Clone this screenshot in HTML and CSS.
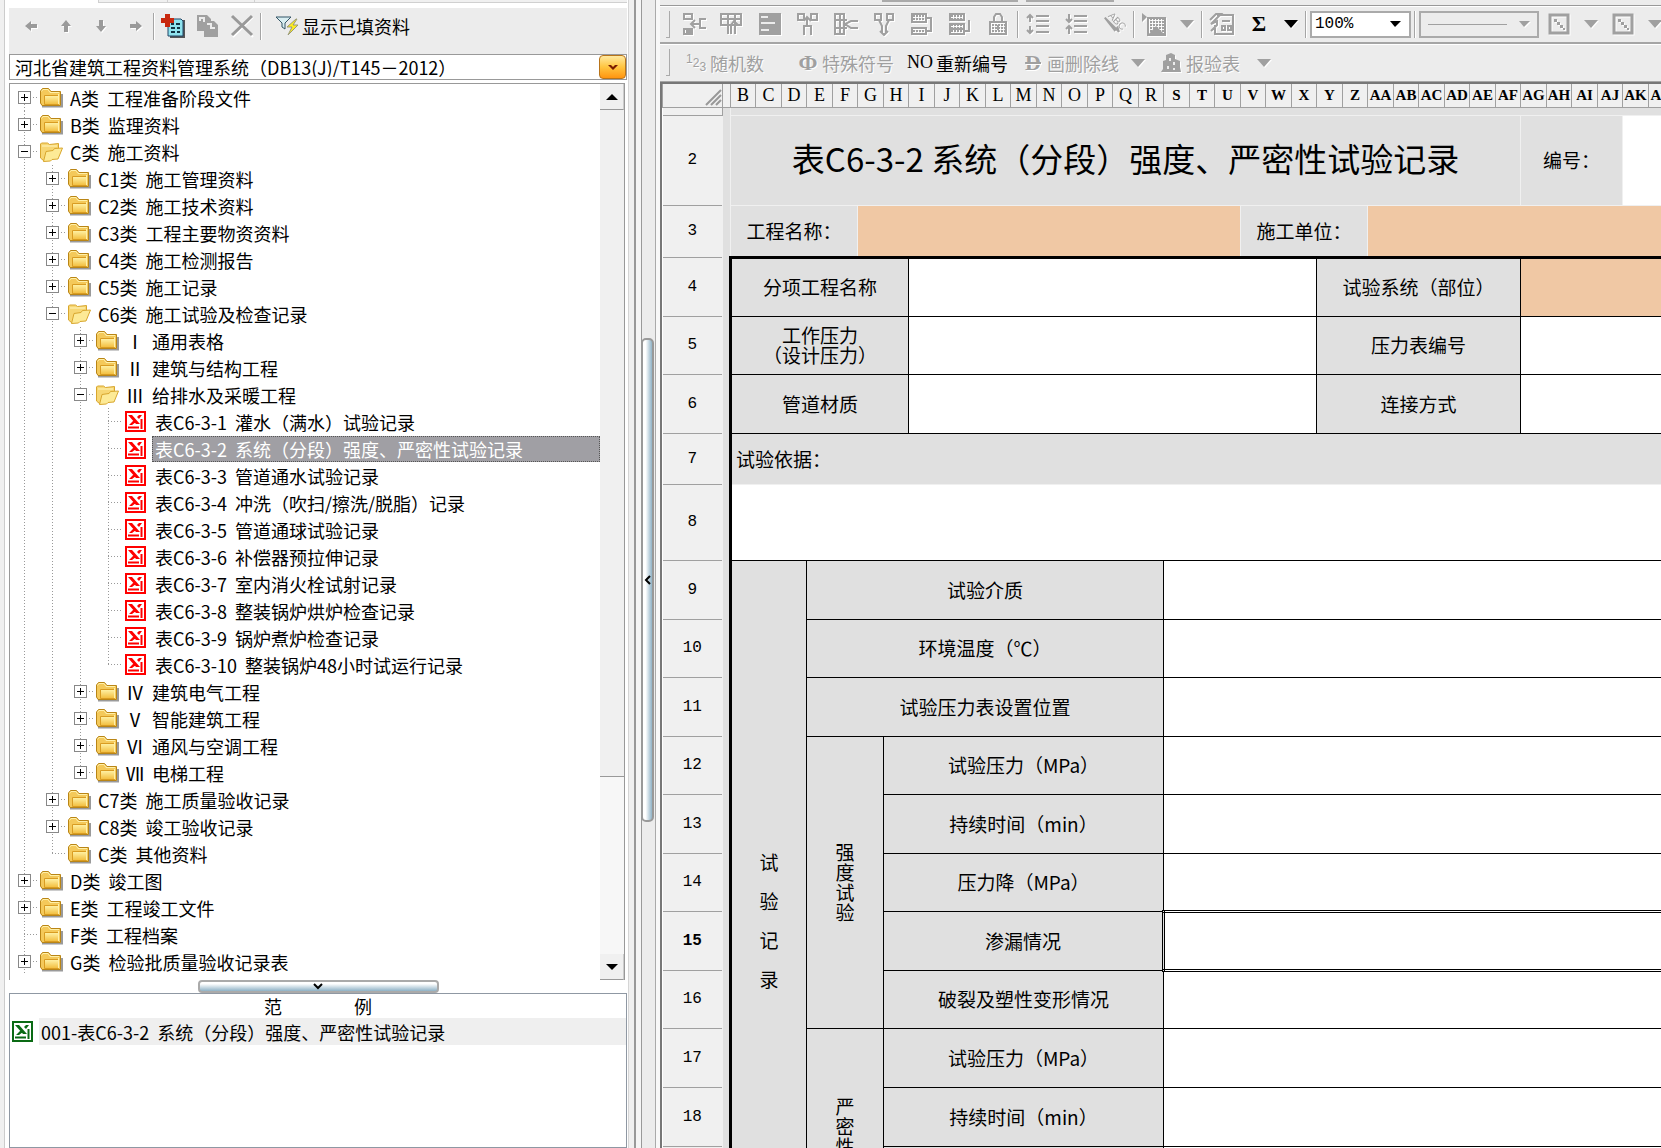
FILE: index.html
```html
<!DOCTYPE html>
<html lang="zh-CN">
<head>
<meta charset="utf-8">
<title>河北省建筑工程资料管理系统</title>
<link rel="stylesheet" href="styles.css">
</head>
<body>
<svg class="defs" aria-hidden="true">
  <defs>
    <linearGradient id="gold" x1="0" y1="0" x2="0" y2="1"><stop offset="0" stop-color="#fff3a8"/><stop offset="1" stop-color="#f2bd3c"/></linearGradient>
    <pattern id="dots" width="3" height="3" patternUnits="userSpaceOnUse"><path d="M0 0h2v2H0z" fill="#a0a0a0"/></pattern>
    <symbol id="folder" viewBox="0 0 24 21">
      <path d="M3 19.500h20V7" fill="none" stroke="#9a9a9a" stroke-width="2"/>
      <path d="M1.500 16V4l2-2.500h6L12 4.500h9.500V18.500H3z" fill="#f4c95a" stroke="#b98516"/>
      <path d="M2.500 4.500l1.500-2h5l2 3h9" fill="none" stroke="#fff0a8"/>
      <path d="M5.500 8.500h14v9h-14z" fill="url(#gold)" stroke="#d99c22"/>
      <path d="M19.500 7v10" stroke="#fff0a8"/>
    </symbol>
    <symbol id="open" viewBox="0 0 24 21">
      <path d="M1.500 17V3l1-1h6l2 1.500 9-1v5L5 20z" fill="#f7d774" stroke="#d8a62e"/>
      <path d="M3 5h15" stroke="#fff6bf"/>
      <path d="M4.500 20.500L7 10.500l7-1 1.500-2 8-.5-4.500 11-6 .5-1.500 1.500z" fill="#fdea96" stroke="#d8a62e"/>
    </symbol>
    <symbol id="sheet" viewBox="0 0 21 21">
      <path d="M0 0h21v21H0z" fill="currentColor"/><path d="M2 2h17v17H2z" fill="#fff"/>
      <path d="M3 4h4l8 9h-4zM14 4h3l-3 4-2-2zM4 14l5-5 2 2-4 3z" fill="currentColor"/>
      <path d="M3 16.500h11M16.500 8v10" stroke="currentColor" stroke-width="2"/>
    </symbol>
  </defs>
</svg>

<aside class="side">
  <div class="tabs"><span></span><span></span><span></span></div>
  <div class="tools">
    <button class="arrow" aria-label="后退"><svg width="14" height="14"><path d="M1 7l6-5v3h6v4H7v3z"/></svg></button>
    <button class="arrow" aria-label="上移"><svg width="14" height="14"><path d="M7 1l5 6H9v6H5V7H2z"/></svg></button>
    <button class="arrow" aria-label="下移"><svg width="14" height="14"><path d="M7 13L2 7h3V1h4v6h3z"/></svg></button>
    <button class="arrow" aria-label="前进"><svg width="14" height="14"><path d="M13 7L7 2v3H1v4h6v3z"/></svg></button>
    <i class="sep"></i>
    <button class="tool" aria-label="新建"><svg width="26" height="26"><path d="M10 7h15v18H10z" fill="#555"/><path d="M8 6h13l2 2v15H8z" fill="#8fe3ee" stroke="#246" /><path d="M11 11h3m2 0h4m-9 4h4m2 0h3m-9 4h4m2 0h3" stroke="#134" stroke-width="2"/><path d="M5 1h5v4h4v5h-4v4H5v-4H1V5h4z" fill="#c8280e"/></svg></button>
    <button class="tool" aria-label="复制"><svg width="26" height="26"><path d="M2 2h10l4 4v12H2zM9 8h10l4 4v12H9z" fill="#a0a0a0"/><path d="M9 9V5H5v3m7 3h4v4h4" fill="none" stroke="#ececec" stroke-width="2"/></svg></button>
    <button class="tool" aria-label="删除"><svg width="26" height="26"><path d="M3 4l20 20M23 4L3 24" stroke="#fff" stroke-width="2"/><path d="M2 3l20 19M22 3L2 22" stroke="#999" stroke-width="3"/></svg></button>
    <i class="sep"></i>
    <button class="filter"><svg width="26" height="24"><path d="M2 3h15l-6 6v6l-3-2V9z" fill="#d9eef2" stroke="#356"/><path d="M22 5l-9 8h5l-4 8 10-10h-5l4-6z" fill="#ffee20" stroke="#997"/></svg>显示已填资料</button>
  </div>
  <div class="combo">
    <select aria-label="资料系统"><option>河北省建筑工程资料管理系统（DB13(J)/T145－2012）</option></select>
    <span class="drop" aria-hidden="true"><svg width="12" height="8"><path d="M1 2h3l2 2 2-2h3L6 7z" fill="#7a1c00"/></svg></span>
  </div>

  <div class="treebox">
    <ul class="tree">
      <li class="first"><div class="row"><button class="toggle plus" aria-label="展开"></button><svg class="ico"><use href="#folder"/></svg><span class="label"><b>A类</b><span>工程准备阶段文件</span></span></div></li>
      <li><div class="row"><button class="toggle plus" aria-label="展开"></button><svg class="ico"><use href="#folder"/></svg><span class="label"><b>B类</b><span>监理资料</span></span></div></li>
      <li><div class="row"><button class="toggle" aria-label="折叠"></button><svg class="ico"><use href="#open"/></svg><span class="label"><b>C类</b><span>施工资料</span></span></div>
        <ul>
          <li><div class="row"><button class="toggle plus" aria-label="展开"></button><svg class="ico"><use href="#folder"/></svg><span class="label"><b>C1类</b><span>施工管理资料</span></span></div></li>
          <li><div class="row"><button class="toggle plus" aria-label="展开"></button><svg class="ico"><use href="#folder"/></svg><span class="label"><b>C2类</b><span>施工技术资料</span></span></div></li>
          <li><div class="row"><button class="toggle plus" aria-label="展开"></button><svg class="ico"><use href="#folder"/></svg><span class="label"><b>C3类</b><span>工程主要物资资料</span></span></div></li>
          <li><div class="row"><button class="toggle plus" aria-label="展开"></button><svg class="ico"><use href="#folder"/></svg><span class="label"><b>C4类</b><span>施工检测报告</span></span></div></li>
          <li><div class="row"><button class="toggle plus" aria-label="展开"></button><svg class="ico"><use href="#folder"/></svg><span class="label"><b>C5类</b><span>施工记录</span></span></div></li>
          <li><div class="row"><button class="toggle" aria-label="折叠"></button><svg class="ico"><use href="#open"/></svg><span class="label"><b>C6类</b><span>施工试验及检查记录</span></span></div>
            <ul>
              <li><div class="row"><button class="toggle plus" aria-label="展开"></button><svg class="ico"><use href="#folder"/></svg><span class="label"><b>Ⅰ</b><span>通用表格</span></span></div></li>
              <li><div class="row"><button class="toggle plus" aria-label="展开"></button><svg class="ico"><use href="#folder"/></svg><span class="label"><b>Ⅱ</b><span>建筑与结构工程</span></span></div></li>
              <li><div class="row"><button class="toggle" aria-label="折叠"></button><svg class="ico"><use href="#open"/></svg><span class="label"><b>Ⅲ</b><span>给排水及采暖工程</span></span></div>
                <ul class="forms">
                  <li><div class="row"><i class="stub"></i><svg class="ico"><use href="#sheet"/></svg><span class="label"><b>表C6-3-1</b><span>灌水（满水）试验记录</span></span></div></li>
                  <li><div class="row"><i class="stub"></i><svg class="ico"><use href="#sheet"/></svg><span class="label selected"><b>表C6-3-2</b><span>系统（分段）强度、严密性试验记录</span></span></div></li>
                  <li><div class="row"><i class="stub"></i><svg class="ico"><use href="#sheet"/></svg><span class="label"><b>表C6-3-3</b><span>管道通水试验记录</span></span></div></li>
                  <li><div class="row"><i class="stub"></i><svg class="ico"><use href="#sheet"/></svg><span class="label"><b>表C6-3-4</b><span>冲洗（吹扫/擦洗/脱脂）记录</span></span></div></li>
                  <li><div class="row"><i class="stub"></i><svg class="ico"><use href="#sheet"/></svg><span class="label"><b>表C6-3-5</b><span>管道通球试验记录</span></span></div></li>
                  <li><div class="row"><i class="stub"></i><svg class="ico"><use href="#sheet"/></svg><span class="label"><b>表C6-3-6</b><span>补偿器预拉伸记录</span></span></div></li>
                  <li><div class="row"><i class="stub"></i><svg class="ico"><use href="#sheet"/></svg><span class="label"><b>表C6-3-7</b><span>室内消火栓试射记录</span></span></div></li>
                  <li><div class="row"><i class="stub"></i><svg class="ico"><use href="#sheet"/></svg><span class="label"><b>表C6-3-8</b><span>整装锅炉烘炉检查记录</span></span></div></li>
                  <li><div class="row"><i class="stub"></i><svg class="ico"><use href="#sheet"/></svg><span class="label"><b>表C6-3-9</b><span>锅炉煮炉检查记录</span></span></div></li>
                  <li><div class="row"><i class="stub"></i><svg class="ico"><use href="#sheet"/></svg><span class="label"><b>表C6-3-10</b><span>整装锅炉48小时试运行记录</span></span></div></li>
                </ul>
              </li>
              <li><div class="row"><button class="toggle plus" aria-label="展开"></button><svg class="ico"><use href="#folder"/></svg><span class="label"><b>Ⅳ</b><span>建筑电气工程</span></span></div></li>
              <li><div class="row"><button class="toggle plus" aria-label="展开"></button><svg class="ico"><use href="#folder"/></svg><span class="label"><b>Ⅴ</b><span>智能建筑工程</span></span></div></li>
              <li><div class="row"><button class="toggle plus" aria-label="展开"></button><svg class="ico"><use href="#folder"/></svg><span class="label"><b>Ⅵ</b><span>通风与空调工程</span></span></div></li>
              <li><div class="row"><button class="toggle plus" aria-label="展开"></button><svg class="ico"><use href="#folder"/></svg><span class="label"><b>Ⅶ</b><span>电梯工程</span></span></div></li>
            </ul>
          </li>
          <li><div class="row"><button class="toggle plus" aria-label="展开"></button><svg class="ico"><use href="#folder"/></svg><span class="label"><b>C7类</b><span>施工质量验收记录</span></span></div></li>
          <li><div class="row"><button class="toggle plus" aria-label="展开"></button><svg class="ico"><use href="#folder"/></svg><span class="label"><b>C8类</b><span>竣工验收记录</span></span></div></li>
          <li><div class="row"><i class="stub"></i><svg class="ico"><use href="#folder"/></svg><span class="label"><b>C类</b><span>其他资料</span></span></div></li>
        </ul>
      </li>
      <li><div class="row"><button class="toggle plus" aria-label="展开"></button><svg class="ico"><use href="#folder"/></svg><span class="label"><b>D类</b><span>竣工图</span></span></div></li>
      <li><div class="row"><button class="toggle plus" aria-label="展开"></button><svg class="ico"><use href="#folder"/></svg><span class="label"><b>E类</b><span>工程竣工文件</span></span></div></li>
      <li><div class="row"><i class="stub"></i><svg class="ico"><use href="#folder"/></svg><span class="label"><b>F类</b><span>工程档案</span></span></div></li>
      <li class="more"><div class="row"><button class="toggle plus" aria-label="展开"></button><svg class="ico"><use href="#folder"/></svg><span class="label"><b>G类</b><span>检验批质量验收记录表</span></span></div></li>
    </ul>
    <div class="scroll">
      <button aria-label="向上滚动"><svg width="12" height="6"><path d="M0 6l6-6 6 6z"/></svg></button>
      <div class="track"><div class="thumb"></div></div>
      <button aria-label="向下滚动"><svg width="12" height="6"><path d="M0 0l6 6 6-6z"/></svg></button>
    </div>
  </div>

  <div class="hsplit"><button aria-label="收起范例"><svg width="10" height="8"><path d="M1 1l4 4 4-4" fill="none" stroke="#000" stroke-width="2"/></svg></button></div>
  <section class="sample">
    <h2><span>范</span><span>例</span></h2>
    <div class="sample-row"><svg class="green"><use href="#sheet"/></svg><span class="label"><b>001-表C6-3-2</b><span>系统（分段）强度、严密性试验记录</span></span></div>
  </section>
</aside>

<div class="vsplit"><button aria-label="收起目录"><svg width="8" height="10"><path d="M6 1L2 5l4 4" fill="none" stroke="#000" stroke-width="2"/></svg></button></div>

<main class="work">
  <div class="strip"><i></i><i></i></div>
  <div class="bar">
    <i class="grip"></i>
    <button class="b" aria-label="插入单元格"><svg width="24" height="24"><path d="M2 2h8v5H2zM2 17h8v5H2zM24 7h-6v9h6M18 12H9m4-4l-4 4 4 4" /><path d="M4 18h5v3H4z" class="f"/></svg></button>
    <button class="b" aria-label="插入行"><svg width="24" height="24"><path d="M1 2h20v11H1zM1 7h20M8 2v11M15 2v11M8 22v-9h3v9m4 0v-9M11 13l3-4 4 4"/></svg></button>
    <button class="b" aria-label="表格"><svg width="24" height="24"><path d="M1 1h22v22H1z" class="f"/><path d="M3 5h7M3 11h14M3 18h8" class="w"/></svg></button>
    <button class="b" aria-label="插入列"><svg width="24" height="24"><path d="M2 2h6v6H2zM15 2h6v6h-6zM8 23v-9h7v9M11 14V5m-3 4l3-4 4 4"/></svg></button>
    <button class="b" aria-label="删除单元格"><svg width="24" height="24"><path d="M1 2h9v20H1zM1 8h12M1 16h12M6 2v20M24 9h-7l-6 3 6 4h7"/></svg></button>
    <button class="b" aria-label="合并"><svg width="24" height="24"><path d="M3 2h6v6H3zM15 2h6v6h-6zM7 8l3 6v8M17 8l-3 6v8M8 19l4 4 4-4"/></svg></button>
    <button class="b" aria-label="复制行"><svg width="24" height="24"><path d="M2 2h14v8H2zM2 16h14v6H2z" fill="url(#dots)"/><path d="M17 6h4v13h-4"/></svg></button>
    <button class="b" aria-label="删除行"><svg width="24" height="24"><path d="M2 2h14v6H2zM2 12h14v10H2z" fill="url(#dots)"/><path d="M2 17h14M17 19h4V8"/></svg></button>
    <button class="b" aria-label="锁定"><svg width="24" height="24"><path d="M8 10V5l2-3h4l2 3v5" /><path d="M4 10h16v12H4z" fill="url(#dots)"/><path d="M12 13v5" /></svg></button>
    <i class="sep"></i>
    <button class="b" aria-label="增大行距"><svg width="24" height="24"><path d="M4 3v7M1 6l3-3 3 3M4 14v7m-3-3l3 3 3-3M10 4h13M10 9h13M10 14h13M10 20h13"/></svg></button>
    <button class="b" aria-label="减小行距"><svg width="24" height="24"><path d="M5 2v8M2 7l3 3 3-3M5 22v-8m-3 3l3-3 3 3M10 4h13M10 9h13M10 14h13M10 20h13"/></svg></button>
    <button class="b" aria-label="文字方向"><svg width="24" height="24"><g transform="rotate(45 12 12)"><text x="2" y="11" class="tiny">ABC</text><path d="M1 14h20l-4-2v4z"/></g></svg></button>
    <i class="sep"></i>
    <button class="b" aria-label="图片"><svg width="26" height="24"><path d="M1 1v9l5-5z" class="f"/><path d="M7 6h17v17H7z" fill="url(#dots)"/><path d="M7 23l8-9 9 9z" class="f"/></svg></button>
    <button class="t" aria-label="图片选项"><svg width="14" height="8"><path d="M0 0h14L7 8z"/></svg></button>
    <i class="sep"></i>
    <button class="b" aria-label="窗体"><svg width="26" height="24"><path d="M8 3h16v19H6V13M13 9h8M13 14h3v4h-3zM19 14h3v4h-3zM1 8l6-6h5L2 12l6-3v4L2 19"/></svg></button>
    <button class="sigma" aria-label="求和">Σ</button>
    <button class="t on" aria-label="求和选项"><svg width="14" height="8"><path d="M0 0h14L7 8z"/></svg></button>
    <i class="sep"></i>
    <div class="pick zoom"><select aria-label="缩放"><option>100%</option></select><svg width="11" height="7"><path d="M0 0h11L5 6z"/></svg></div>
    <i class="sep"></i>
    <div class="pick line"><hr><svg width="11" height="7"><path d="M0 0h11L5 6z"/></svg></div>
    <button class="b" aria-label="边框"><svg width="24" height="24"><path d="M3 3h18v18H3z" class="thick"/><path d="M7 7h3v3H7zM10 10h3v3h-3zM13 13h3v3h-3zM16 16h2v2h-2z" class="f"/></svg></button>
    <button class="t" aria-label="边框选项"><svg width="14" height="8"><path d="M0 0h14L7 8z"/></svg></button>
    <button class="b" aria-label="斜线"><svg width="24" height="24"><path d="M3 3h18v18H3z" class="thick"/><path d="M7 7h3v3H7zM10 10h3v3h-3zM13 13h3v3h-3zM16 16h2v2h-2z" class="f"/></svg></button>
    <button class="t" aria-label="斜线选项"><svg width="14" height="8"><path d="M0 0h14L7 8z"/></svg></button>
  </div>
  <div class="bar second">
    <i class="grip"></i>
    <button class="cmd random"><span class="nums"><i>1</i><i>2</i><i>3</i></span>随机数</button>
    <button class="cmd symbol"><span class="phi">Ф</span>特殊符号</button>
    <button class="cmd on"><span class="no">NO</span>重新编号</button>
    <button class="cmd strike"><span class="phi"><s>D</s></span>画删除线</button>
    <button class="t" aria-label="删除线选项"><svg width="14" height="8"><path d="M0 0h14L7 8z"/></svg></button>
    <button class="cmd report"><svg width="22" height="22"><path d="M6 3l5-2 4 2v4l5 2v6l1 5H1l2-3V9l3-1z" class="f"/><path d="M10 6v3m4 1v3m-6 1v3m6-1v2" class="w"/></svg>报验表</button>
    <button class="t" aria-label="报验表选项"><svg width="14" height="8"><path d="M0 0h14L7 8z"/></svg></button>
  </div>

  <div class="sheet">
    <table>
      <colgroup><col class="ch"><col class="ca"></colgroup>
      <colgroup class="cs"><col><col><col><col><col><col><col><col><col><col><col><col><col><col><col><col><col><col><col><col><col><col><col><col><col><col><col><col><col><col><col><col><col><col><col><col><col></colgroup>
      <thead>
        <tr><th class="corner"><svg width="18" height="18"><path d="M2 17L17 2M7 17L17 7M12 17l5-5" stroke="#999" stroke-width="2"/></svg></th><th></th><th>B</th><th>C</th><th>D</th><th>E</th><th>F</th><th>G</th><th>H</th><th>I</th><th>J</th><th>K</th><th>L</th><th>M</th><th>N</th><th>O</th><th>P</th><th>Q</th><th>R</th><th class="act">S</th><th class="act">T</th><th class="act">U</th><th class="act">V</th><th class="act">W</th><th class="act">X</th><th class="act">Y</th><th class="act">Z</th><th class="act">AA</th><th class="act">AB</th><th class="act">AC</th><th class="act">AD</th><th class="act">AE</th><th class="act">AF</th><th class="act">AG</th><th class="act">AH</th><th class="act">AI</th><th class="act">AJ</th><th class="act">AK</th><th class="act">AL</th></tr>
      </thead>
      <tbody>
        <tr class="h8"><th></th><td class="soft" rowspan="20"></td><td class="soft" colspan="37"></td></tr>
        <tr class="h90"><th>2</th><td class="soft title" colspan="31">表C6-3-2 系统（分段）强度、严密性试验记录</td><td class="soft" colspan="4">编号：</td><td class="soft white" colspan="2"></td></tr>
        <tr class="h52"><th>3</th><td class="soft" colspan="5">工程名称：</td><td class="soft fill" colspan="15"></td><td class="soft" colspan="5">施工单位：</td><td class="soft fill" colspan="12"></td></tr>
        <tr class="h59 heavy"><th>4</th><td class="edge" colspan="7">分项工程名称</td><td class="white" colspan="16"></td><td colspan="8">试验系统（部位）</td><td class="fill" colspan="6"></td></tr>
        <tr class="h58"><th>5</th><td class="edge" colspan="7">工作压力<br>（设计压力）</td><td class="white" colspan="16"></td><td colspan="8">压力表编号</td><td class="white" colspan="6"></td></tr>
        <tr class="h59"><th>6</th><td class="edge" colspan="7">管道材质</td><td class="white" colspan="16"></td><td colspan="8">连接方式</td><td class="white" colspan="6"></td></tr>
        <tr class="h51"><th>7</th><td class="edge basis" colspan="37">试验依据：</td></tr>
        <tr class="h76"><th>8</th><td class="edge white open" colspan="37"></td></tr>
        <tr class="h59"><th>9</th><td class="edge wide" colspan="3" rowspan="12">试<br>验<br>记<br>录</td><td colspan="14">试验介质</td><td class="white" colspan="20"></td></tr>
        <tr class="h58"><th>10</th><td colspan="14">环境温度（℃）</td><td class="white" colspan="20"></td></tr>
        <tr class="h59"><th>11</th><td colspan="14">试验压力表设置位置</td><td class="white" colspan="20"></td></tr>
        <tr class="h58"><th>12</th><td colspan="3" rowspan="5">强<br>度<br>试<br>验</td><td colspan="11">试验压力（MPa）</td><td class="white" colspan="20"></td></tr>
        <tr class="h59"><th>13</th><td colspan="11">持续时间（min）</td><td class="white" colspan="20"></td></tr>
        <tr class="h58"><th>14</th><td colspan="11">压力降（MPa）</td><td class="white" colspan="20"></td></tr>
        <tr class="h59"><th class="now">15</th><td colspan="11">渗漏情况</td><td class="white cursor" colspan="20"></td></tr>
        <tr class="h58"><th>16</th><td colspan="11">破裂及塑性变形情况</td><td class="white" colspan="20"></td></tr>
        <tr class="h59"><th>17</th><td colspan="3" rowspan="4">严<br>密<br>性<br>试<br>验</td><td colspan="11">试验压力（MPa）</td><td class="white" colspan="20"></td></tr>
        <tr class="h59"><th>18</th><td colspan="11">持续时间（min）</td><td class="white" colspan="20"></td></tr>
        <tr class="h58"><th>19</th><td colspan="11">压力降（MPa）</td><td class="white" colspan="20"></td></tr>
        <tr class="h59"><th>20</th><td colspan="11">渗漏情况</td><td class="white" colspan="20"></td></tr>
      </tbody>
    </table>
  </div>
</main>
</body>
</html>
```
FILE: styles.css
```css
* { box-sizing: border-box; }
body {
  margin: 0;
  height: 100vh;
  display: flex;
  overflow: hidden;
  background: #ececec;
  color: #000;
  font: 18px/20px "Noto Sans CJK SC", "Liberation Sans", sans-serif;
}
button, select {
  margin: 0;
  padding: 0;
  border: 0;
  background: none;
  color: inherit;
  font: inherit;
  appearance: none;
}
svg { display: block; flex: none; fill: none; }
.defs { position: absolute; width: 0; height: 0; }

/* Catalogue pane */
.side {
  flex: none;
  width: 636px;
  display: flex;
  flex-direction: column;
  padding: 0 7px 0 5px;
  border-left: 4px solid #f0f0f0;
  border-right: 2px solid #999;
  background: #fff;
  box-shadow: inset 1px 0 #ccc, inset -5px 0 #f0f0f0, inset -6px 0 #d5d5d5;
}
.tabs { flex: none; height: 8px; display: flex; padding-left: 89px; }
.tabs span { height: 3px; flex: 1; background: #f0f0f0; border: solid #d0d0d0; border-width: 0 0 1px 1px; }
.tabs span:nth-child(1) { flex: 0 0 69px; }
.tabs span:nth-child(2) { flex: 0 0 87px; }
.tools { flex: none; height: 46px; display: flex; align-items: center; padding: 0 0 10px 4px; background: #ececec; }
.arrow { width: 35px; display: grid; place-items: center; }
.arrow svg { fill: #9a9a9a; filter: drop-shadow(1px 1px #fff); }
.sep { flex: none; width: 2px; height: 27px; background: #a5a5a5; border-right: 1px solid #fff; }
.tool { width: 35px; display: grid; place-items: center; }
.filter { display: flex; align-items: center; gap: 2px; padding-left: 12px; }
.combo { flex: none; height: 26px; display: flex; border: 1px solid #999; background: #fff; }
.combo select { flex: 1; min-width: 0; padding-left: 5px; }
.drop {
  width: 27px;
  display: grid;
  place-items: center;
  border: 1px solid #b8741a;
  border-radius: 4px;
  background: linear-gradient(#ffe9a0, #ffc540 50%, #ff9510);
}

.treebox { flex: 1; min-height: 0; display: flex; margin: 3px 2px 0 0; border: 1px solid #999; border-bottom: 0; background: #fff; }
.tree { flex: 1; min-width: 0; padding: 0 0 0 8px; overflow: hidden; }
.tree, .tree ul { margin: 0; list-style: none; }
.tree ul { padding-left: 28px; }
.tree li { background: repeating-linear-gradient(#999 0 1px, #fff 1px 3px) 6px 0 / 1px 100% no-repeat; }
.tree li:last-child { background-size: 1px 14px; }
.tree li.first { background-position: 6px 14px; }
.tree li.more { background-size: 1px 100%; }
.row { height: 27px; display: flex; align-items: center; background: repeating-linear-gradient(90deg, #999 0 1px, #fff 1px 3px) 6px 13px / 15px 1px no-repeat; }
.toggle { flex: none; width: 13px; height: 13px; border: 1px solid #888; background: linear-gradient(#000, #000) center / 7px 1px no-repeat #fff; }
.toggle.plus { background: linear-gradient(#000, #000) center / 7px 1px no-repeat, linear-gradient(#000, #000) center / 1px 7px no-repeat #fff; }
.ico { width: 24px; height: 21px; margin-left: 8px; color: #f00; }
.stub { flex: none; width: 13px; height: 1px; }
.label { display: flex; gap: 8px; padding: 2px 7px; white-space: nowrap; }
.label b { font-weight: 400; }
.forms .stub { width: 23px; }
.forms .ico { width: 21px; margin: 0 6px 0 0; }
.forms .label { flex: 1; padding: 2px; border: 1px solid transparent; }
.forms .selected { background: #a09fa4; border: 1px dotted #555; color: #fff; }

.scroll { flex: none; width: 24px; display: flex; flex-direction: column; background: #f7f7f7; }
.scroll button { flex: none; height: 26px; display: grid; place-items: center; background: #f0f0f0; border-bottom: 1px solid #999; border-right: 1px solid #ccc; }
.scroll svg { fill: #000; }
.track { flex: 1; }
.thumb { height: 79%; background: #f0f0f0; border-bottom: 1px solid #999; }

.hsplit { flex: none; height: 13px; display: flex; justify-content: center; }
.hsplit button { width: 241px; display: grid; place-items: center; border: 2px solid #aaa; border-radius: 4px; background: linear-gradient(#fff 20%, #8fb2c6); }
.sample { flex: none; height: 155px; border: 1px solid #8f98a3; background: #fff; }
.sample h2 { height: 24px; margin: 0; display: flex; align-items: center; justify-content: center; gap: 72px; font-size: 18px; font-weight: 400; }
.sample-row { height: 27px; display: flex; align-items: center; padding-left: 2px; background: linear-gradient(90deg, #fff 29px, #efefef 29px); }
.sample-row .label { padding: 0 8px; }
.green { width: 21px; height: 21px; color: #0a6a14; }

/* Pane divider */
.vsplit { flex: none; width: 24px; padding: 0 6px 0 5px; display: flex; flex-direction: column; justify-content: center; border-right: 4px solid #f8f8f8; box-shadow: inset 5px 0 #f5f5f5, inset 6px 0 #999, inset -1px 0 #aaa; }
.vsplit button { height: 484px; width: 13px; margin-top: 12px; display: grid; place-items: center; border: 2px solid #999; border-radius: 5px; background: linear-gradient(90deg, #fff 30%, #8fb2c6); }

/* Workspace */
.work { flex: 1; min-width: 0; display: flex; flex-direction: column; color: #a0a0a0; }
.strip { flex: none; height: 6px; display: flex; gap: 8px; padding-left: 222px; border-bottom: 1px solid #999; }
.strip i { width: 136px; height: 2px; background: #aaa; }
.strip i + i { width: 88px; }
.bar { flex: none; height: 37px; display: flex; align-items: center; padding-left: 6px; overflow: hidden; border: solid #a5a5a5; border-width: 0 0 1px; box-shadow: inset 0 1px #fff; }
.second { height: 39px; border-top-width: 1px; }
.grip { flex: none; width: 4px; height: 27px; margin-right: 5px; border: solid #aaa; border-width: 0 1px 1px 0; }
.b { flex: none; width: 38px; display: grid; place-items: center; }
.b path { stroke: #a0a0a0; stroke-width: 2; }
.b .thick { stroke-width: 3; }
.bar .f { fill: #a0a0a0; stroke: none; }
.bar .w { stroke: #ececec; stroke-width: 2; }
.bar svg { filter: drop-shadow(1px 1px #fff); }
.tiny { font: 10px "Liberation Sans", sans-serif; fill: #a0a0a0; }
.t { flex: none; width: 28px; display: grid; place-items: center; }
.t svg { fill: #a0a0a0; }
.t.on svg { fill: #000; }
.sigma { flex: none; width: 36px; color: #000; font: bold 22px "Liberation Serif", serif; }
.pick { flex: none; height: 27px; display: flex; align-items: center; border: 2px solid #aaa; }
.zoom { width: 101px; margin: 0 3px; padding-right: 8px; background: #fff; color: #000; }
.zoom select { flex: 1; padding-left: 3px; font: 16px "Liberation Mono", monospace; }
.zoom svg { fill: #000; }
.line { width: 120px; margin: 0 1px 0 3px; padding: 0 7px; gap: 12px; }
.line hr { flex: 1; margin: 0; border: 0; border-top: 1px solid #a0a0a0; }
.line svg { fill: #a0a0a0; }
.line ~ .t { width: 26px; }

.cmd { flex: none; display: flex; align-items: center; gap: 4px; white-space: nowrap; text-shadow: 1px 1px #fff; }
.cmd.on { color: #000; text-shadow: none; }
.random { margin: 0 34px 0 11px; }
.nums { display: flex; font: 12px/20px "Liberation Sans", sans-serif; }
.nums i { font-style: normal; align-self: center; }
.nums i:first-child { margin-bottom: 8px; }
.nums i:last-child { margin-top: 8px; }
.symbol { margin-right: 13px; }
.phi { width: 20px; text-align: center; font: bold 22px "Liberation Serif", serif; }
.no { width: 25px; font: 18px "Liberation Serif", serif; }
.strike { margin: 0 5px 0 15px; }
.report { margin-left: 8px; }
.report + .t { margin-left: 10px; }

/* Spreadsheet */
.sheet { flex: 1; min-height: 0; overflow: hidden; border: solid #777; border-width: 2px 0 0 2px; background: #fff; color: #000; }
table { width: 100%; table-layout: fixed; border-collapse: collapse; }
.ch { width: 60px; }
.ca { width: 8px; }
.cs col { width: 25px; }
.cs col:nth-child(even) { width: 26px; }
th { padding: 0; border: 1px solid #a0a0a0; background: #f0f0f0; font: 16px/18px "Liberation Mono", monospace; }
thead th { height: 23px; border-top: 0; overflow: hidden; font: 18px/20px "Liberation Serif", serif; }
tbody th { border-left: 0; }
.act, .now { font-weight: 700; }
thead .act { font-size: 15px; }
.corner svg { margin: 4px 0 0 auto; }
td { padding: 0; border: 1px solid #000; background: #e0e0e0; text-align: center; font-size: 19px; line-height: 20px; }
.soft { border-color: #f0f0f0; }
.white { background: #fff; }
.fill { background: #f0c8a4; }
.title { font-size: 33px; line-height: 40px; padding-bottom: 4px; }
.edge { border-left: 3px solid #000; }
.heavy td { border-top: 3px solid #000; }
.basis { padding-left: 4px; text-align: left; border-bottom-color: #f0f0f0; }
.open { border-top-color: #f0f0f0; }
.wide { padding-top: 16px; line-height: 39px; }
.cursor { border: 3px double #000; }
.h8 { height: 8px; }
.h51 { height: 51px; }
.h52 { height: 52px; }
.h58 { height: 58px; }
.h59 { height: 59px; }
.h76 { height: 76px; }
.h90 { height: 90px; }
```
